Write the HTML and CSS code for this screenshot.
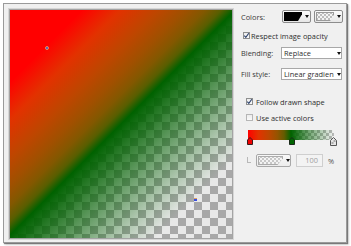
FILE: index.html
```html
<!DOCTYPE html>
<html>
<head>
<meta charset="utf-8">
<link rel="stylesheet" href="styles.css">
</head>
<body>
<div class="window">
  <div class="canvas">
    <div class="paint"></div>
    <span class="dot dot-start"></span>
    <span class="dot dot-end"></span>
  </div>
  <div class="panel">
    <div class="row row-colors">
      <span class="lbl">Colors:</span>
      <div class="swbtn">
        <span class="sw sw-black"></span>
        <span class="arr"></span>
      </div>
      <div class="swbtn">
        <span class="sw sw-checker"></span>
        <span class="arr"></span>
      </div>
    </div>
    <div class="row chkrow row-respect">
      <span class="box checked"><svg viewBox="0 0 7 7" width="7" height="7"><polyline points="1.3,3.6 2.8,5.3 5.8,1.2" fill="none" stroke="#2a3f6a" stroke-width="1.1"/></svg></span>
      <span class="txt">Respect image opacity</span>
    </div>
    <div class="row row-blend">
      <span class="lbl">Blending:</span>
      <div class="select"><span class="val">Replace</span><span class="arr"></span></div>
    </div>
    <div class="row row-fill">
      <span class="lbl">Fill style:</span>
      <div class="select"><span class="val">Linear gradien</span><span class="arr"></span></div>
    </div>
    <div class="row chkrow indent row-follow">
      <span class="box checked"><svg viewBox="0 0 7 7" width="7" height="7"><polyline points="1.3,3.6 2.8,5.3 5.8,1.2" fill="none" stroke="#2a3f6a" stroke-width="1.1"/></svg></span>
      <span class="txt">Follow drawn shape</span>
    </div>
    <div class="row chkrow indent row-active">
      <span class="box unchecked"></span>
      <span class="txt">Use active colors</span>
    </div>
    <div class="gradbar">
      <div class="bar"></div>
      <svg class="handle h-red" viewBox="0 0 6 8" width="6" height="8"><polygon points="3,0.5 5.5,3 5.5,7.5 0.5,7.5 0.5,3" fill="#f00000" stroke="#3a1a1a"/></svg>
      <svg class="handle h-green" viewBox="0 0 6 8" width="6" height="8"><polygon points="3,0.5 5.5,3 5.5,7.5 0.5,7.5 0.5,3" fill="#006400" stroke="#1a2a1a"/></svg>
      <svg class="handle h-clear" viewBox="0 0 7 9" width="7" height="9"><polygon points="3.5,0.5 6.5,3.5 6.5,8.5 0.5,8.5 0.5,3.5" fill="#e6e6e6" stroke="#555"/><rect x="1.5" y="5" width="2" height="2" fill="#aaa"/><rect x="3.5" y="3" width="2" height="2" fill="#aaa"/></svg>
    </div>
    <div class="row row-stop">
      <span class="tree"></span>
      <div class="swbtn wide disabled">
        <span class="sw sw-checker light"></span>
        <span class="arr"></span>
      </div>
      <div class="num">100</div>
      <span class="pct">%</span>
    </div>
  </div>
</div>
</body>
</html>
```

FILE: styles.css
```css
html, body {
  margin: 0;
  padding: 0;
}
body {
  width: 351px;
  height: 246px;
  overflow: hidden;
  background: #ffffff;
  font-family: "Open Sans", "Noto Sans", sans-serif;
  font-size: 7.4px;
  color: #2e2e2e;
}
.window {
  box-sizing: border-box;
  margin: 3px 0 0 3px;
  width: 344px;
  height: 240px;
  border: 1px solid #9a9a9a;
  box-shadow: 1px 1px 1px rgba(0,0,0,0.45), 2px 2px 2px rgba(0,0,0,0.15);
  background: #f0f0f0;
  display: flex;
  padding: 5px 0 0 5px;
}
.canvas {
  position: relative;
  flex: none;
  width: 222px;
  height: 228px;
  border: 1px solid #a4a4a4;
  box-shadow: 0 0 0 1px #d6d6d6;
  background-color: #e8e8e8;
  background-image:
    linear-gradient(45deg, #a8a8a8 25%, transparent 25%, transparent 75%, #a8a8a8 75%),
    linear-gradient(45deg, #a8a8a8 25%, transparent 25%, transparent 75%, #a8a8a8 75%);
  background-size: 16px 16px;
  background-position: 0 0, 8px 8px;
  overflow: hidden;
}
.paint {
  width: 100%;
  height: 100%;
  background: linear-gradient(135deg,
    #ff0000 16%,
    rgb(226,50,0) 24.5%,
    rgb(190,70,0) 33%,
    rgb(160,80,0) 39%,
    rgb(130,88,0) 43.5%,
    rgb(88,94,0) 47%,
    #006200 50%,
    rgba(0,98,0,0.6) 63%,
    rgba(0,98,0,0.25) 74%,
    rgba(0,98,0,0) 83%);
}
.dot {
  position: absolute;
  box-sizing: border-box;
  border-radius: 50%;
}
.dot-start {
  left: 35px;
  top: 36px;
  width: 4px;
  height: 4px;
  background: #3450e0;
  border: 1px solid #e8905a;
}
.dot-end {
  left: 184px;
  top: 188px;
  width: 3px;
  height: 3px;
  background: #3a4ee0;
  border-top: 1px solid #e0a060;
  border-radius: 0;
}
.panel {
  margin-left: 8px;
  display: flex;
  flex-direction: column;
  width: 102px;
}
.row {
  display: flex;
  align-items: center;
  flex: none;
}
.lbl {
  width: 40px;
  flex: none;
  color: #3a3a3a;
}
.row-colors {
  margin-top: 1px;
  height: 13px;
}
.swbtn {
  box-sizing: border-box;
  width: 29px;
  height: 13px;
  border: 1px solid #8c8c8c;
  border-radius: 2px;
  background: linear-gradient(#fbfbfb, #e6e6e6);
  display: flex;
  align-items: center;
  padding-left: 1px;
  margin-left: 1px;
}
.swbtn + .swbtn {
  margin-left: 3px;
}
.sw {
  display: block;
  width: 18px;
  height: 9px;
  clip-path: polygon(0 0, 100% 0, 100% 25%, 78% 100%, 0 100%);
}
.sw-black {
  background: #000;
}
.sw-checker {
  background-color: #f4f4f4;
  background-image:
    linear-gradient(45deg, #bdbdbd 25%, transparent 25%, transparent 75%, #bdbdbd 75%),
    linear-gradient(45deg, #bdbdbd 25%, transparent 25%, transparent 75%, #bdbdbd 75%);
  background-size: 4px 4px;
  background-position: 0 0, 2px 2px;
  box-shadow: inset 0 0 0 1px #9a9a9a;
}
.arr {
  display: block;
  width: 0;
  height: 0;
  border-left: 2.5px solid transparent;
  border-right: 2.5px solid transparent;
  border-top: 3px solid #111;
  margin-left: 3px;
}
.chkrow {
  height: 9px;
}
.box {
  box-sizing: border-box;
  width: 7px;
  height: 7px;
  flex: none;
  border: 1px solid #8e8f8f;
  background: linear-gradient(#ececec, #fafafa);
  position: relative;
  margin-left: 2px;
}
.box svg {
  position: absolute;
  left: -1px;
  top: -1px;
}
.box.unchecked {
  border-color: #b6b6b6;
}
.txt {
  margin-left: 1px;
  white-space: nowrap;
}
.row-respect {
  margin-top: 8px;
}
.row-blend {
  margin-top: 7px;
  height: 12px;
}
.row-fill {
  margin-top: 9px;
  height: 12px;
}
.select {
  box-sizing: border-box;
  width: 61px;
  height: 12px;
  border: 1px solid #a8a8a8;
  background: #ffffff;
  display: flex;
  align-items: center;
  padding-left: 2px;
}
.select .val {
  width: 50px;
  white-space: nowrap;
}
.select .arr {
  margin-left: 3px;
}
.indent {
  padding-left: 3px;
}
.indent .txt {
  margin-left: 3px;
}
.row-follow {
  margin-top: 17px;
}
.row-active {
  margin-top: 7px;
}
.gradbar {
  position: relative;
  margin-top: 8px;
  margin-left: 7px;
  width: 86px;
  height: 16px;
  flex: none;
}
.bar {
  width: 86px;
  height: 10px;
  background-image:
    linear-gradient(90deg,
      #ff0000 0%,
      rgb(226,50,0) 12%,
      rgb(190,70,0) 24%,
      rgb(150,84,0) 34%,
      rgb(100,92,0) 42%,
      #006200 50%,
      rgba(0,98,0,0.5) 72%,
      rgba(0,98,0,0) 100%),
    linear-gradient(45deg, #b8b8b8 25%, transparent 25%, transparent 75%, #b8b8b8 75%),
    linear-gradient(45deg, #b8b8b8 25%, transparent 25%, transparent 75%, #b8b8b8 75%);
  background-color: #f2f2f2;
  background-size: 100% 100%, 6px 6px, 6px 6px;
  background-position: 0 0, 0 0, 3px 3px;
}
.handle {
  position: absolute;
  display: block;
}
.h-red {
  left: -1px;
  top: 7px;
}
.h-green {
  left: 41px;
  top: 7px;
}
.h-clear {
  left: 82px;
  top: 7px;
}
.row-stop {
  margin-top: 8px;
  height: 13px;
}
.tree {
  display: block;
  width: 3px;
  height: 5px;
  border-left: 1px solid #b8b8b8;
  border-bottom: 1px solid #b8b8b8;
  margin-left: 6px;
  margin-top: -2px;
}
.swbtn.wide {
  width: 35px;
  margin-left: 5px;
  padding-left: 1px;
}
.swbtn.disabled {
  border-color: #a8a8a8;
  background: linear-gradient(#f8f8f8, #ececec);
}
.sw.light {
  width: 25px;
  opacity: 0.8;
}
.num {
  box-sizing: border-box;
  width: 27px;
  height: 13px;
  margin-left: 5px;
  border: 1px solid #cfcfcf;
  background: #f3f3f3;
  color: #a0a0a0;
  text-align: right;
  padding-right: 4px;
  line-height: 11px;
}
.pct {
  margin-left: 5px;
  color: #555;
}
```
